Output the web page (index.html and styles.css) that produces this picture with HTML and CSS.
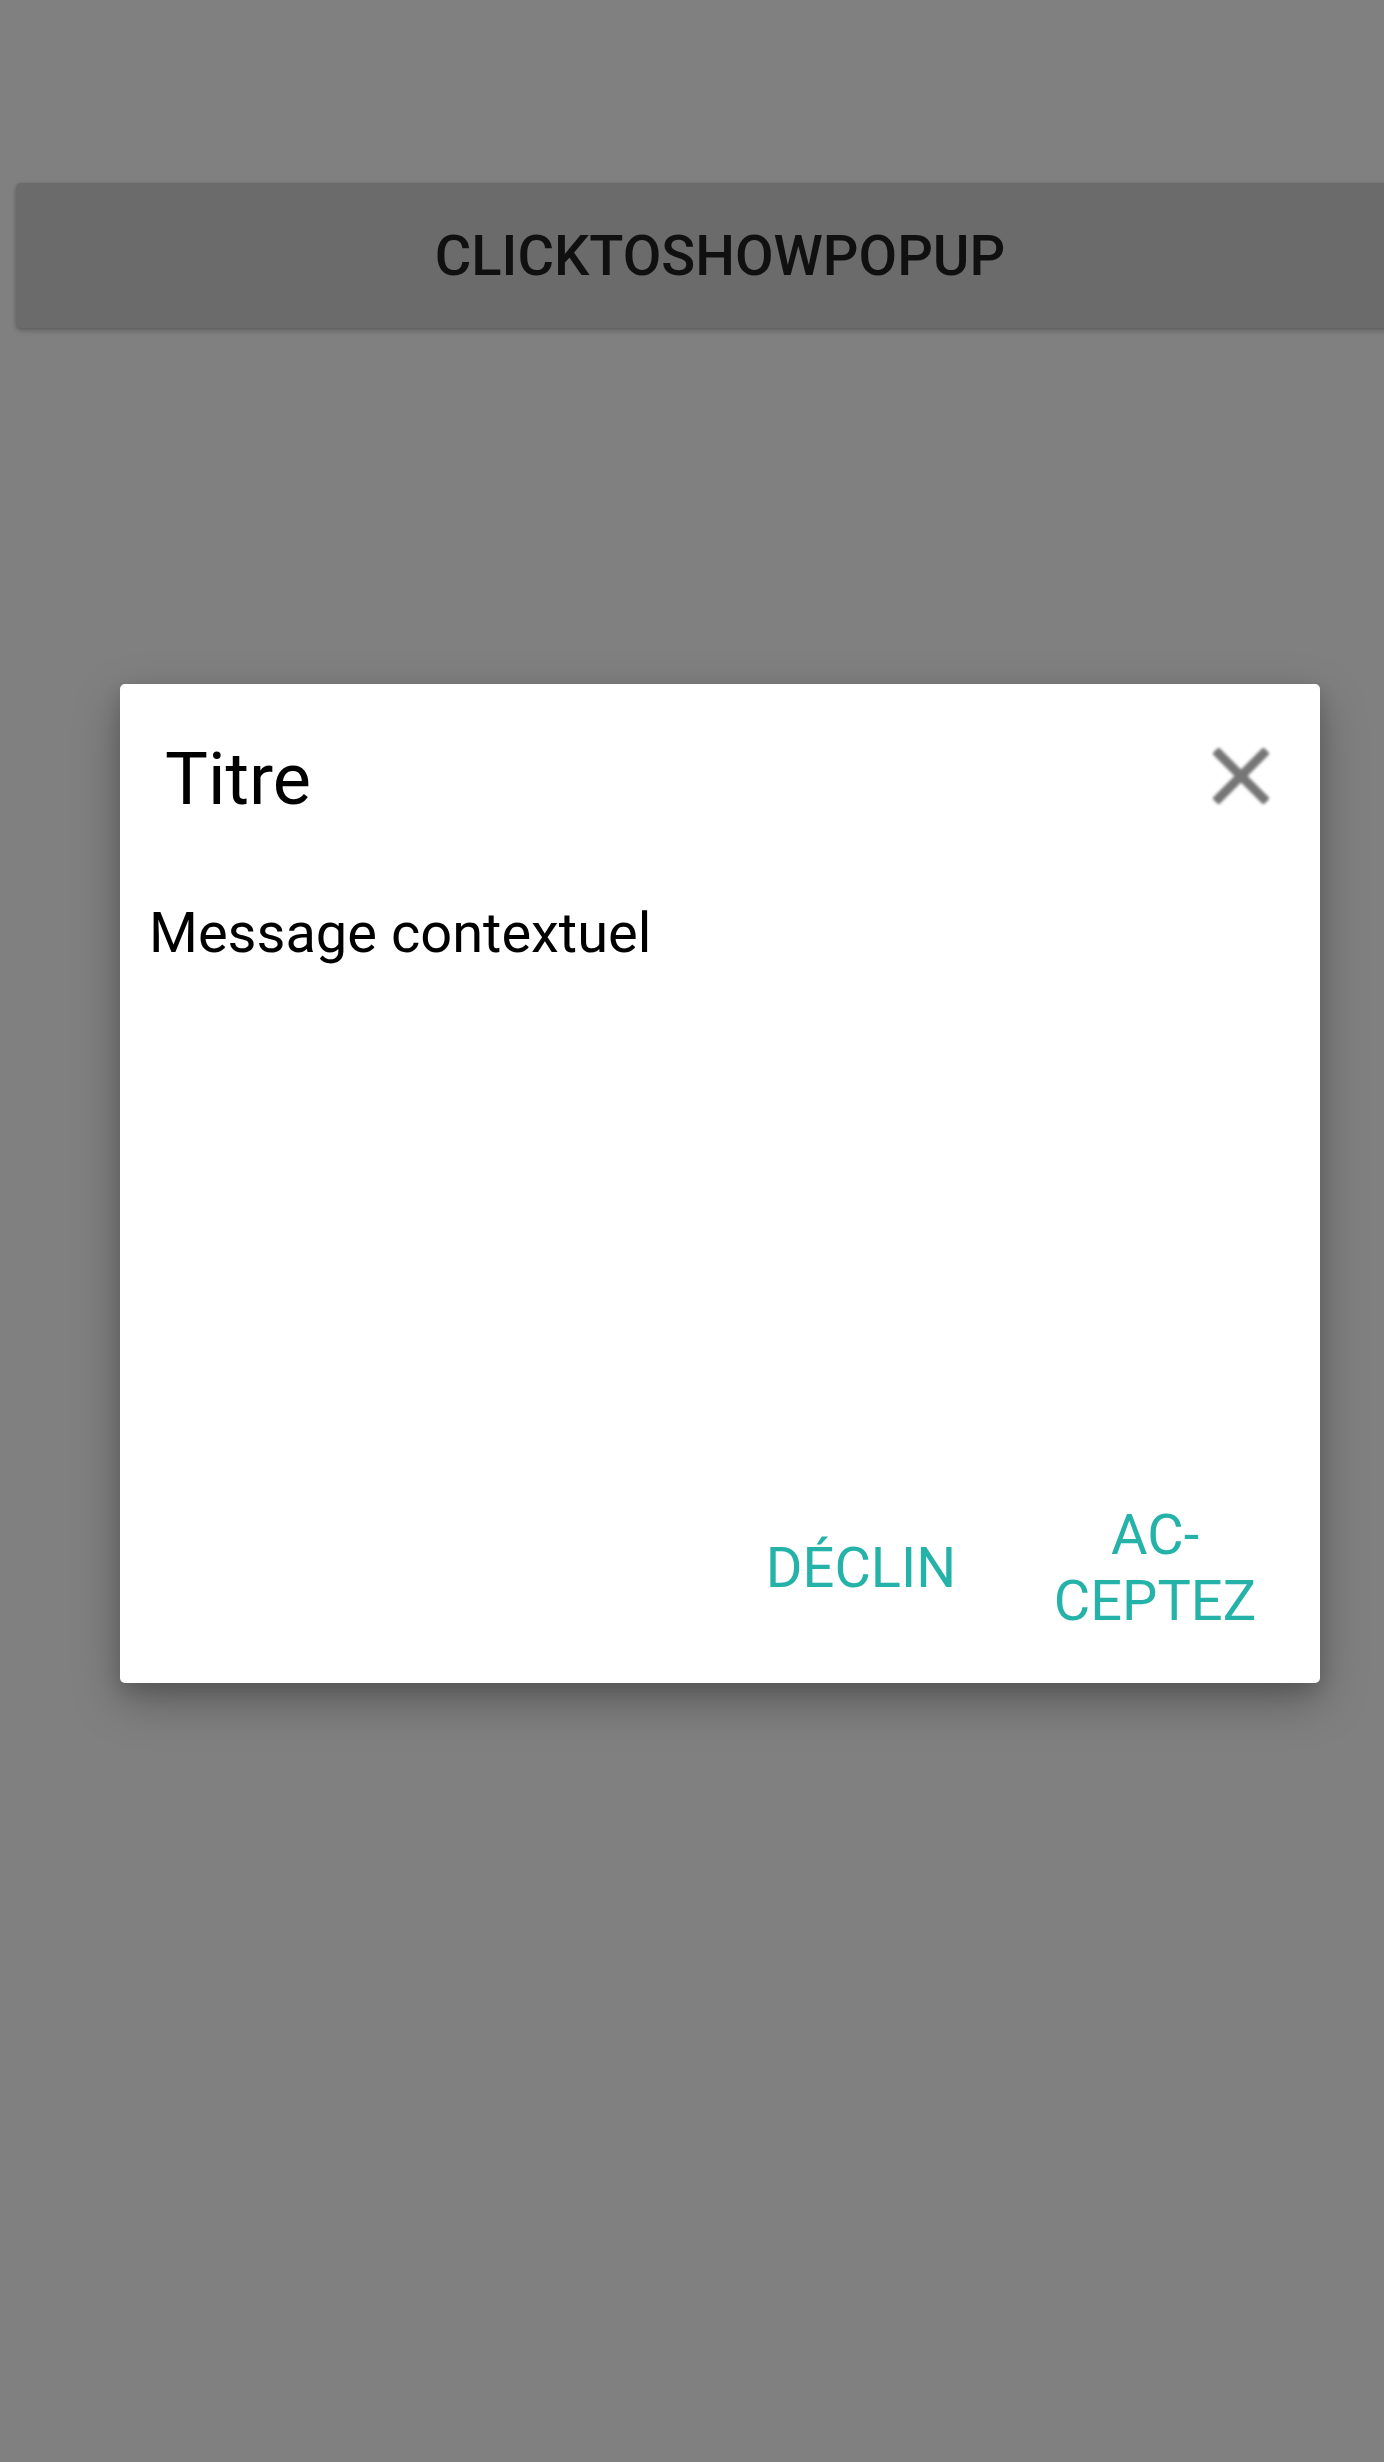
FILE: index.html
```html
<!DOCTYPE html>
<html lang="fr">
<head>
<meta charset="utf-8">
<title>Popup</title>
<link rel="stylesheet" href="styles.css">
</head>
<body>
<div class="screen">
  <div class="top-bar">
    <button class="show-btn" type="button">ClickToShowPopup</button>
  </div>
  <div class="dialog" role="dialog" aria-labelledby="dlg-title">
    <div class="dialog-header">
      <h1 class="dialog-title" id="dlg-title">Titre</h1>
      <button class="close-btn" type="button" aria-label="Fermer">
        <svg class="close-icon" viewBox="5 5 14 14" width="56" height="56" aria-hidden="true">
          <path d="M19 6.41L17.59 5 12 10.59 6.41 5 5 6.41 10.59 12 5 17.59 6.41 19 12 13.41 17.59 19 19 17.59 13.41 12z"/>
        </svg>
      </button>
    </div>
    <p class="dialog-message">Message contextuel</p>
    <div class="dialog-actions">
      <button class="action-btn decline" type="button">Déclin</button>
      <button class="action-btn accept" type="button">Ac&shy;ceptez</button>
    </div>
  </div>
</div>
</body>
</html>
```

FILE: styles.css
```css
html, body {
  margin: 0;
  padding: 0;
}

body {
  background: #808080;
  font-family: Roboto, "Liberation Sans", Arial, sans-serif;
  overflow: hidden;
}

.screen {
  width: 1384px;
  height: 2462px;
  overflow: hidden;
}

.top-bar {
  padding-top: 183px;
  padding-left: 16px;
}

.show-btn {
  display: block;
  width: 1408px;
  height: 145px;
  border: none;
  border-radius: 5px;
  background: #6b6b6b;
  box-shadow: 0 3px 5px rgba(0, 0, 0, 0.22), 0 0 3px rgba(0, 0, 0, 0.12);
  color: #101010;
  font-family: Roboto, "Liberation Sans", Arial, sans-serif;
  font-weight: 500;
  font-size: 56px;
  text-transform: uppercase;
  padding: 0;
  line-height: 66px;
}

.dialog {
  margin-top: 356px;
  margin-left: 120px;
  width: 1200px;
  height: 999px;
  background: #ffffff;
  border-radius: 5px;
  box-shadow: 0 18px 48px rgba(0, 0, 0, 0.28), 0 8px 18px rgba(0, 0, 0, 0.14);
  display: flex;
  flex-direction: column;
  box-sizing: border-box;
}

.dialog-header {
  display: flex;
  align-items: center;
  justify-content: space-between;
  padding: 54px 51px 0 45px;
}

.dialog-title {
  margin: 0;
  font-weight: 400;
  font-size: 72px;
  line-height: 84px;
  color: #000000;
}

.close-btn {
  border: none;
  background: none;
  padding: 0;
  margin-top: -8px;
  width: 56px;
  height: 56px;
  display: block;
}

.close-icon {
  display: block;
  fill: #767676;
  stroke: #767676;
  stroke-width: 0.3;
  filter: blur(1.4px);
}

.dialog-message {
  margin: 78px 0 0 29px;
  font-size: 56px;
  line-height: 66px;
  color: #000000;
}

.dialog-actions {
  margin-top: auto;
  display: flex;
  justify-content: flex-end;
  align-items: center;
  gap: 69px;
  padding: 0 60px 49px 0;
}

.action-btn {
  border: none;
  background: none;
  padding: 0;
  font-family: Roboto, "Liberation Sans", Arial, sans-serif;
  font-weight: 400;
  font-size: 56px;
  line-height: 66px;
  color: #25b3a9;
  text-transform: uppercase;
  text-align: center;
}

.decline {
  width: 240px;
}

.accept {
  width: 210px;
}
```
